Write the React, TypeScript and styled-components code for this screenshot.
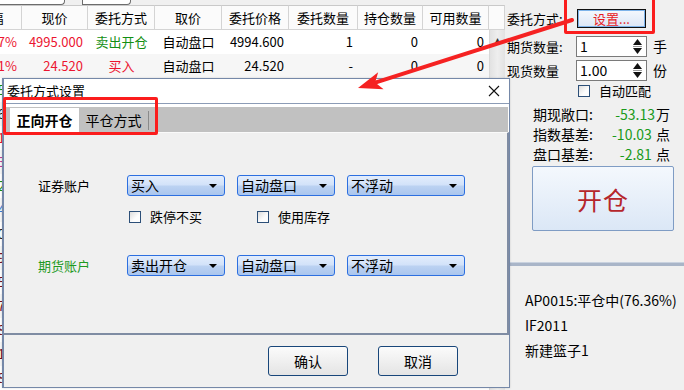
import styled, { createGlobalStyle } from 'styled-components'

const Global = createGlobalStyle`
	html, body {
		margin: 0;
		padding: 0;
		background: #f0f0f0;
	}
	body {
		font-family: "Noto Sans CJK SC", "Microsoft YaHei", sans-serif;
		font-size: 13px;
		line-height: 1.2;
		color: #000;
	}
	* {
		box-sizing: border-box;
	}
`

const Screen = styled.div`
	position: relative;
	width: 684px;
	height: 390px;
	overflow: hidden;
	display: flex;
	background: #f0f0f0;
`

const LeftPane = styled.div`
	width: 505px;
	flex: none;
	display: flex;
	flex-direction: column;
	overflow: hidden;
`

const TopStrip = styled.div`
	height: 8px;
	display: flex;
`

const Stub = styled.div<{ $left: number; $width: number }>`
	margin-left: ${p => p.$left}px;
	width: ${p => p.$width}px;
	height: 5px;
	background: #fff;
	border: 1px solid #6d6d6d;
	border-top: none;
	border-radius: 0 0 4px 0;
`

const Grid = styled.div`
	margin-left: -40px;
	display: grid;
	grid-template-columns: 62px 66px 67px 67px 67px 69px 65px 66px 16px;
	grid-template-rows: 25px;
	grid-auto-rows: 24px;
	background: #fff;
`

const HeadCell = styled.div`
	display: flex;
	align-items: center;
	justify-content: center;
	background: #fbfbfb;
	border-top: 1px solid #c9c9c9;
	border-bottom: 1px solid #d4d4d4;
	border-right: 1px solid #d4d4d4;
	white-space: nowrap;
	overflow: hidden;
`

const Cell = styled.div<{ $align?: string; $color?: string; $alt?: boolean }>`
	display: flex;
	align-items: center;
	justify-content: ${p => p.$align || 'flex-end'};
	padding: 0 5px;
	color: ${p => p.$color || '#000'};
	background: ${p => (p.$alt ? '#f6f6f6' : '#fff')};
	white-space: nowrap;
	overflow: hidden;
`

const ScrollTrack = styled.div<{ $rows: number }>`
	grid-column: 9;
	grid-row: 2 / span ${p => p.$rows};
	background: linear-gradient(to right, #e2e2e2, #eeeeee 50%, #e2e2e2);
	border-left: 1px solid #d8d8d8;
	display: flex;
	justify-content: center;
	padding-top: 4px;
	color: #333;
	font-size: 10px;
	line-height: 10px;
`

const RightPane = styled.div`
	flex: 1;
	display: flex;
	flex-direction: column;
	padding-left: 2px;
`

const FieldRow = styled.div<{ $top: number; $h: number }>`
	display: flex;
	align-items: center;
	margin-top: ${p => p.$top}px;
	height: ${p => p.$h}px;
	white-space: nowrap;
`

const Label = styled.span<{ $w: number }>`
	width: ${p => p.$w}px;
	flex: none;
`

const SetButton = styled.div`
	width: 69px;
	height: 19px;
	border: 1px solid #111;
	box-shadow: inset 0 0 0 1px #7eb4ea;
	background: linear-gradient(#f4f8fd, #dce7f6);
	color: #e8191f;
	display: flex;
	align-items: center;
	justify-content: center;
	font-size: 13px;
`

const Spin = styled.div`
	width: 71px;
	height: 21px;
	border: 1px solid #7a7a7a;
	background: #fff;
	display: flex;
	align-items: center;
`

const SpinValue = styled.span`
	flex: 1;
	padding-left: 3px;
	font-size: 14px;
`

const SpinArrows = styled.div`
	width: 15px;
	height: 100%;
	display: flex;
	flex-direction: column;
	align-items: center;
	justify-content: center;
	gap: 1px;
	margin-right: 1px;
`

const SpinLine = styled.div`
	width: 9px;
	height: 1px;
	background: #9a9a9a;
`

const Unit = styled.span`
	margin-left: 6px;
	font-size: 14px;
`

const Box = styled.span`
	width: 12px;
	height: 12px;
	flex: none;
	border: 1px solid #2c4f78;
	background: linear-gradient(135deg, #dcdcdc, #fdfdfd 60%);
`

const CheckRow = styled.label<{ $left: number; $top: number }>`
	display: flex;
	align-items: center;
	gap: 9px;
	margin-left: ${p => p.$left}px;
	margin-top: ${p => p.$top}px;
	height: 14px;
	white-space: nowrap;
`

const Stats = styled.div`
	margin-top: 6px;
	padding: 0 14px 0 26px;
	display: flex;
	flex-direction: column;
`

const StatRow = styled.div`
	height: 20px;
	display: flex;
	align-items: center;
	justify-content: space-between;
	font-size: 14px;
`

const StatValue = styled.span`
	color: #1a9a1a;
	& > b {
		font-weight: normal;
		color: #000;
		margin-left: 1px;
	}
`

const OpenButton = styled.div`
	margin: 2px 0 0 25px;
	width: 142px;
	height: 65px;
	border: 1px solid #7f9cc4;
	border-radius: 2px;
	background: linear-gradient(#f4f8fd, #dbe7f6);
	color: #b5262b;
	font-size: 25px;
	display: flex;
	align-items: center;
	justify-content: center;
	letter-spacing: 1px;
`

const Splitter = styled.div`
	margin: 31px 0 0 -2px;
	height: 4px;
	background: #a9b5c8;
	border-top: 1px solid #c9d2df;
`

const InfoList = styled.div`
	margin-top: 22px;
	padding-left: 18px;
	display: flex;
	flex-direction: column;
`

const InfoLine = styled.div`
	height: 25px;
	line-height: 25px;
	font-size: 14px;
	white-space: nowrap;
`

/* ---------- dialog ---------- */

const Dialog = styled.div`
	position: absolute;
	left: 2px;
	top: 78px;
	width: 508px;
	height: 310px;
	border: 1px solid #7588a8;
	border-left-width: 2px;
	background: #f0f0f0;
	display: flex;
	flex-direction: column;
	box-shadow: 0 0 2px rgba(0, 0, 0, 0.15);
`

const TitleBar = styled.div`
	height: 25px;
	flex: none;
	background: #fff;
	border-bottom: 1px solid #8c9cb6;
	display: flex;
	align-items: center;
	justify-content: space-between;
	padding: 0 9px 0 3px;
	font-size: 13px;
`

const TabBar = styled.div`
	background: #fff;
	padding: 3px 1px 0 0;
	flex: none;
`

const TabStrip = styled.div`
	height: 25px;
	background: #c1c1c1;
	display: flex;
	align-items: flex-end;
	padding-left: 6px;
`

const Tab = styled.div<{ $active?: boolean }>`
	width: 69px;
	height: 24px;
	display: flex;
	align-items: center;
	justify-content: center;
	font-size: 14px;
	font-weight: ${p => (p.$active ? 700 : 400)};
	background: ${p => (p.$active ? '#fff' : 'transparent')};
`

const TabSep = styled.div`
	width: 1px;
	height: 19px;
	margin-bottom: 2px;
	background: #8a8a8a;
`

const Content = styled.div`
	height: 203px;
	flex: none;
	border-top: 1px solid #fafafa;
	border-right: 2px solid #7f8ca3;
	border-bottom: 2px solid #7f8ca3;
	padding: 42px 0 0 34px;
	display: flex;
	flex-direction: column;
`

const FormRow = styled.div<{ $top?: number }>`
	display: flex;
	align-items: center;
	height: 21px;
	margin-top: ${p => p.$top || 0}px;
`

const FormLabel = styled.span<{ $color?: string }>`
	width: 89px;
	flex: none;
	color: ${p => p.$color || '#000'};
	font-size: 13px;
`

const Select = styled.div<{ $w: number }>`
	width: ${p => p.$w}px;
	height: 21px;
	margin-right: 12px;
	border: 1px solid #2c6fe0;
	border-radius: 3px;
	background: linear-gradient(#e3edfc 0%, #d2e2f9 48%, #bcd2f2 52%, #aac6ee 100%);
	display: flex;
	align-items: center;
	justify-content: space-between;
	padding: 0 7px 0 3px;
	font-size: 14px;
`

const Caret = styled.span`
	width: 0;
	height: 0;
	border-left: 4px solid transparent;
	border-right: 4px solid transparent;
	border-top: 4px solid #000;
`

const Checks = styled.div`
	display: flex;
	margin-top: 14px;
`

const Footer = styled.div`
	flex: 1;
	display: flex;
	justify-content: flex-end;
	align-items: flex-start;
	gap: 30px;
	padding: 11px 51px 0 0;
`

const DlgButton = styled.div`
	width: 80px;
	height: 30px;
	border: 1px solid #18467a;
	border-radius: 3px;
	background: linear-gradient(#fbfbfb, #e4e4e4);
	display: flex;
	align-items: center;
	justify-content: center;
	font-size: 14px;
`

/* ---------- annotations ---------- */

const RedBox = styled.div<{ $x: number; $y: number; $w: number; $h: number }>`
	position: absolute;
	left: ${p => p.$x}px;
	top: ${p => p.$y}px;
	width: ${p => p.$w}px;
	height: ${p => p.$h}px;
	border: 3px solid #fb1d1d;
	border-radius: 2px;
	pointer-events: none;
`

const ArrowLayer = styled.svg`
	position: absolute;
	left: 0;
	top: 0;
	pointer-events: none;
`

const headers = ['涨幅', '现价', '委托方式', '取价', '委托价格', '委托数量', '持仓数量', '可用数量', '']

type Row = { c: string[]; colors: string[] }

const RED = '#ec1530'
const GREEN = '#138f13'

const rows: Row[] = [
	{ c: ['0.07%', '4995.000', '卖出开仓', '自动盘口', '4994.600', '1', '0', '0'], colors: [RED, RED, GREEN] },
	{ c: ['0.41%', '24.520', '买入', '自动盘口', '24.520', '-', '0', '0'], colors: [RED, RED, RED] },
	{ c: ['1.25%', '12.300', '买入', '自动盘口', '12.300', '-', '0', '0'], colors: [GREEN, RED, RED] },
	{ c: ['0.86%', '8.150', '买入', '自动盘口', '8.150', '-', '0', '0'], colors: ['#222', RED, RED] },
	{ c: ['2.01%', '6.420', '买入', '自动盘口', '6.420', '-', '0', '0'], colors: [RED, RED, RED] },
	{ c: ['0.33%', '31.800', '买入', '自动盘口', '31.800', '-', '0', '0'], colors: ['#c03c9a', RED, RED] },
	{ c: ['0.12%', '15.060', '买入', '自动盘口', '15.060', '-', '0', '0'], colors: [GREEN, RED, RED] },
	{ c: ['0.54%', '9.880', '买入', '自动盘口', '9.880', '-', '0', '0'], colors: ['#3a7bd5', RED, RED] },
	{ c: ['1.70%', '4.560', '买入', '自动盘口', '4.560', '-', '0', '0'], colors: ['#222', RED, RED] },
	{ c: ['0.29%', '18.230', '买入', '自动盘口', '18.230', '-', '0', '0'], colors: ['#7a1020', RED, RED] },
	{ c: ['0.45%', '22.100', '买入', '自动盘口', '22.100', '-', '0', '0'], colors: ['#7a1020', RED, RED] },
	{ c: ['0.67%', '7.340', '买入', '自动盘口', '7.340', '-', '0', '0'], colors: ['#7a1020', RED, RED] },
	{ c: ['0.98%', '11.020', '买入', '自动盘口', '11.020', '-', '0', '0'], colors: ['#7a1020', RED, RED] },
	{ c: ['0.21%', '5.900', '买入', '自动盘口', '5.900', '-', '0', '0'], colors: ['#7a1020', RED, RED] },
	{ c: ['0.18%', '3.870', '买入', '自动盘口', '3.870', '-', '0', '0'], colors: ['#7a1020', RED, RED] },
]

const aligns = ['flex-end', 'flex-end', 'center', 'center', 'flex-end', 'flex-end', 'flex-end', 'flex-end']

function Arrow() {
	const tail = { x: 572, y: 20 }
	const tip = { x: 358, y: 88 }
	const dx = tip.x - tail.x
	const dy = tip.y - tail.y
	const len = Math.hypot(dx, dy)
	const ux = dx / len
	const uy = dy / len
	const nx = -uy
	const ny = ux
	const headLen = 24
	const half = 9
	const bx = tip.x - ux * headLen
	const by = tip.y - uy * headLen
	const notchX = tip.x - ux * (headLen - 6)
	const notchY = tip.y - uy * (headLen - 6)
	const pts = [
		[tip.x, tip.y],
		[bx + nx * half, by + ny * half],
		[notchX, notchY],
		[bx - nx * half, by - ny * half],
	]
		.map(p => p.join(','))
		.join(' ')
	return (
		<ArrowLayer width="684" height="390" viewBox="0 0 684 390">
			<line x1={tail.x} y1={tail.y} x2={notchX} y2={notchY} stroke="#f52222" strokeWidth="4" strokeLinecap="round" />
			<polygon points={pts} fill="#f52222" />
		</ArrowLayer>
	)
}

function SpinBox({ value }: { value: string }) {
	return (
		<Spin>
			<SpinValue>{value}</SpinValue>
			<SpinArrows>
				<svg width="9" height="6" viewBox="0 0 9 6">
					<polygon points="4.5,0 9,6 0,6" fill="#111" />
				</svg>
				<SpinLine />
				<svg width="9" height="6" viewBox="0 0 9 6">
					<polygon points="0,0 9,0 4.5,6" fill="#111" />
				</svg>
			</SpinArrows>
		</Spin>
	)
}

function Dropdown({ w, text }: { w: number; text: string }) {
	return (
		<Select $w={w}>
			<span>{text}</span>
			<Caret />
		</Select>
	)
}

export default function App() {
	return (
		<>
			<Global />
			<Screen>
				<LeftPane>
					<TopStrip>
						<Stub $left={-10} $width={75} />
						<Stub $left={17} $width={49} />
					</TopStrip>
					<Grid>
						{headers.map((h, i) => (
							<HeadCell key={i}>{h}</HeadCell>
						))}
						{rows.map((r, ri) =>
							r.c.map((v, ci) => (
								<Cell key={ri + '-' + ci} $align={aligns[ci]} $color={r.colors[ci]} $alt={ri % 2 === 1}>
									{v}
								</Cell>
							))
						)}
						<ScrollTrack $rows={rows.length}>▴</ScrollTrack>
					</Grid>
				</LeftPane>

				<RightPane>
					<FieldRow $top={9} $h={19}>
						<Label $w={70}>委托方式:</Label>
						<SetButton>设置...</SetButton>
					</FieldRow>
					<FieldRow $top={8} $h={21}>
						<Label $w={69}>期货数量:</Label>
						<SpinBox value="1" />
						<Unit>手</Unit>
					</FieldRow>
					<FieldRow $top={3} $h={21}>
						<Label $w={69}>现货数量</Label>
						<SpinBox value="1.00" />
						<Unit>份</Unit>
					</FieldRow>
					<CheckRow $left={71} $top={3}>
						<Box />
						<span>自动匹配</span>
					</CheckRow>
					<Stats>
						<StatRow>
							<span>期现敞口:</span>
							<StatValue>-53.13<b>万</b></StatValue>
						</StatRow>
						<StatRow>
							<span>指数基差:</span>
							<StatValue>-10.03<b> 点</b></StatValue>
						</StatRow>
						<StatRow>
							<span>盘口基差:</span>
							<StatValue>-2.81<b> 点</b></StatValue>
						</StatRow>
					</Stats>
					<OpenButton>开仓</OpenButton>
					<Splitter />
					<InfoList>
						<InfoLine>AP0015:平仓中(76.36%)</InfoLine>
						<InfoLine>IF2011</InfoLine>
						<InfoLine>新建篮子1</InfoLine>
					</InfoList>
				</RightPane>

				<Dialog>
					<TitleBar>
						<span>委托方式设置</span>
						<svg width="12" height="12" viewBox="0 0 12 12">
							<path d="M1 1 L11 11 M11 1 L1 11" stroke="#111" strokeWidth="1.1" />
						</svg>
					</TitleBar>
					<TabBar>
						<TabStrip>
							<Tab $active>正向开仓</Tab>
							<Tab>平仓方式</Tab>
							<TabSep />
						</TabStrip>
					</TabBar>
					<Content>
						<FormRow>
							<FormLabel>证券账户</FormLabel>
							<Dropdown w={98} text="买入" />
							<Dropdown w={98} text="自动盘口" />
							<Dropdown w={118} text="不浮动" />
						</FormRow>
						<Checks>
							<CheckRow $left={91} $top={0}>
								<Box />
								<span>跌停不买</span>
							</CheckRow>
							<CheckRow $left={55} $top={0}>
								<Box />
								<span>使用库存</span>
							</CheckRow>
						</Checks>
						<FormRow $top={31}>
							<FormLabel $color="#1f9a1f">期货账户</FormLabel>
							<Dropdown w={98} text="卖出开仓" />
							<Dropdown w={98} text="自动盘口" />
							<Dropdown w={118} text="不浮动" />
						</FormRow>
					</Content>
					<Footer>
						<DlgButton>确认</DlgButton>
						<DlgButton>取消</DlgButton>
					</Footer>
				</Dialog>

				<RedBox $x={3} $y={97} $w={155} $h={38} />
				<RedBox $x={564} $y={-3} $w={91} $h={37} />
				<Arrow />
			</Screen>
		</>
	)
}
